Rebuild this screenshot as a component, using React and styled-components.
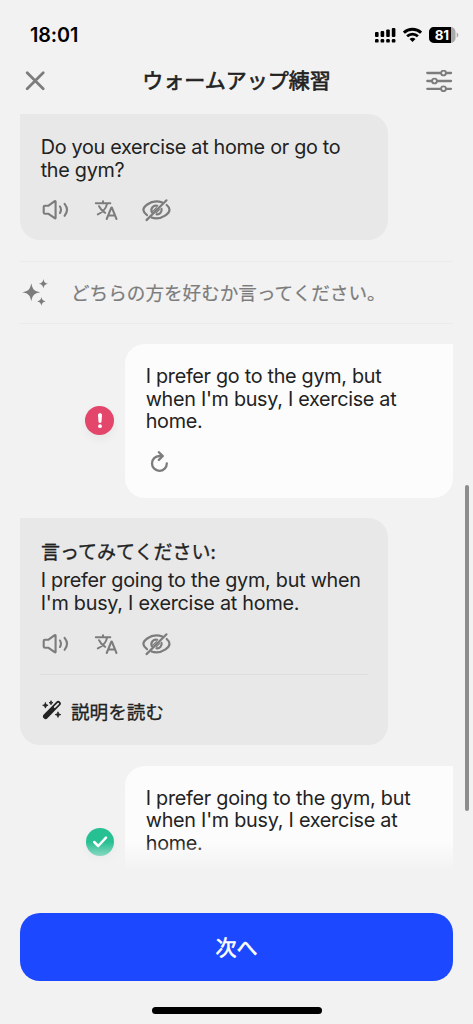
import React from 'react'
import styled, { createGlobalStyle, ThemeProvider } from 'styled-components'

const theme = {
  color: {
    background: '#f2f2f2',
    grey: '#e8e8e8',
    white: '#fcfcfc',
    line: '#ebebeb',
    lineDark: '#dedede',
    text: '#222222',
    icon: '#7c7c7c',
    blue: '#1c48ff',
    red: '#e3456b',
    green: '#27c093',
  },
  font: {
    body: '"Inter", "Noto Sans CJK JP", sans-serif',
    japanese: '"Noto Sans CJK JP", "Inter", sans-serif',
  },
}

const GlobalStyle = createGlobalStyle`
  * {
    box-sizing: border-box;
  }
  body {
    margin: 0;
    background: ${theme.color.background};
    font-family: ${theme.font.body};
    color: ${theme.color.text};
  }
  h1, p {
    margin: 0;
  }
  button {
    border: 0;
    padding: 0;
    background: none;
    cursor: pointer;
    color: inherit;
  }
  svg {
    display: block;
    flex: none;
  }
`

const Screen = styled.div`
  position: relative;
  width: 473px;
  height: 1024px;
  display: flex;
  flex-direction: column;
  overflow: hidden;
`
const StatusBar = styled.div`
  height: 58px;
  flex: none;
  padding: 11px 14px 0 30px;
  display: flex;
  align-items: center;
  justify-content: space-between;
`
const Time = styled.span`
  font-size: 19.8px;
  font-weight: 600;
  letter-spacing: -0.1px;
  color: #000;
`
const StatusIcons = styled.div`
  display: flex;
  align-items: center;
  gap: 7px;
`
const Header = styled.header`
  height: 46px;
  flex: none;
  padding: 0 20px 0 25px;
  display: flex;
  align-items: center;
  justify-content: space-between;
`
const Title = styled.h1`
  font-family: ${({ theme }) => theme.font.japanese};
  font-size: 21px;
  line-height: 30px;
  font-weight: 400;
  -webkit-text-stroke: 0.65px currentColor;
  padding: 0 0 4px 2px;
`
const IconButton = styled.button`
  color: ${({ theme }) => theme.color.icon};
`

// CONVERSATION STYLING

const Conversation = styled.main`
  position: relative;
  height: 767px;
  flex: none;
  padding: 10px 20px 0;
  overflow: hidden;

  &::after {
    content: '';
    position: absolute;
    left: 0;
    right: 0;
    bottom: 0;
    height: 29px;
    background: linear-gradient(#f2f2f200, #f2f2f2);
  }
`
const TutorBubble = styled.section`
  width: 368px;
  height: ${({ $height }) => $height}px;
  padding: ${({ $top }) => $top}px 20px 0;
  background: ${({ theme }) => theme.color.grey};
  border-radius: 0 20px 20px 20px;
`
const UserRow = styled.section`
  display: flex;
  justify-content: flex-end;
  align-items: center;
  gap: 11px;
  margin: 20.5px 0;
`
const UserBubble = styled.div`
  width: 328px;
  height: 153.5px;
  padding: 21px 20px 0;
  background: ${({ theme }) => theme.color.white};
  border-radius: 20px 0 20px 20px;
`
const Message = styled.p`
  padding-left: 0.7px;
  font-size: 19.8px;
  line-height: 22.7px;
  letter-spacing: ${({ $spacing }) => $spacing || -0.29}px;
  white-space: nowrap;
`
const Label = styled.p`
  font-family: ${({ theme }) => theme.font.japanese};
  font-size: 19px;
  line-height: 28px;
  -webkit-text-stroke: 0.35px currentColor;
  padding-left: 1px;
  margin-bottom: 4.5px;
  white-space: nowrap;
`
const Actions = styled.div`
  display: flex;
  align-items: center;
  gap: 24px;
  height: 24px;
  margin-top: ${({ $top }) => $top || 17}px;
  padding-left: ${({ $left }) => $left || 2}px;
  color: ${({ theme }) => theme.color.icon};
`
const Explain = styled.button`
  width: 328px;
  height: 71px;
  margin-top: 18px;
  padding-left: 2px;
  border-top: 1px solid ${({ theme }) => theme.color.lineDark};
  display: flex;
  align-items: center;
  gap: 9px;
  font-family: ${({ theme }) => theme.font.japanese};
  font-size: 18.6px;
  -webkit-text-stroke: 0.3px currentColor;
`
const Prompt = styled.section`
  height: 63px;
  margin: 20.5px 0;
  padding-bottom: 1px;
  border-top: 1px solid ${({ theme }) => theme.color.line};
  border-bottom: 1px solid ${({ theme }) => theme.color.line};
  display: flex;
  align-items: center;
  gap: 23px;
  color: ${({ theme }) => theme.color.icon};
`
const PromptText = styled.p`
  font-family: ${({ theme }) => theme.font.japanese};
  font-size: 18.6px;
  -webkit-text-stroke: 0.2px currentColor;
  white-space: nowrap;
`
const Badge = styled.span`
  width: ${({ $size }) => $size}px;
  height: ${({ $size }) => $size}px;
  border-radius: 50%;
  background: ${({ theme, $color }) => theme.color[$color]};
  box-shadow: 0 4px 10px #0000000d;
  display: flex;
  align-items: center;
  justify-content: center;
`
const Scrollbar = styled.div`
  position: absolute;
  top: 485px;
  right: 4px;
  width: 4px;
  height: 326px;
  border-radius: 2px;
  background: #8d8d8d;
`

// FOOTER STYLING

const Footer = styled.footer`
  flex: 1;
  padding: 42px 20px 10px;
  display: flex;
  flex-direction: column;
  align-items: center;
  justify-content: space-between;
`
const NextButton = styled.button`
  width: 433px;
  height: 68px;
  padding-bottom: 2px;
  border-radius: 20px;
  background: ${({ theme }) => theme.color.blue};
  color: #fff;
  font-family: ${({ theme }) => theme.font.japanese};
  font-size: 21px;
  -webkit-text-stroke: 0.6px currentColor;
`
const HomeIndicator = styled.div`
  width: 170px;
  height: 7px;
  border-radius: 4px;
  background: #000;
`
const BatteryText = styled.text`
  font: 700 13.5px 'Inter', sans-serif;
  letter-spacing: -0.3px;
  fill: #fff;
`

// ICONS

const SignalIcon = () => (
  <svg width="21" height="16" viewBox="0 0 21 16" fill="#000">
    <rect x="0" y="5" width="3.6" height="5" rx="1" />
    <rect x="5.6" y="4" width="3.6" height="6" rx="1" />
    <rect x="11.2" y="2.5" width="3.6" height="7.5" rx="1" />
    <rect x="16.8" y="1" width="3.6" height="9" rx="1" />
    <rect x="0" y="12" width="3.6" height="3.6" rx="1.2" />
    <rect x="5.6" y="12" width="3.6" height="3.6" rx="1.2" />
    <rect x="11.2" y="12" width="3.6" height="3.6" rx="1.2" />
    <rect x="16.8" y="12" width="3.6" height="3.6" rx="1.2" />
  </svg>
)

const WifiIcon = () => (
  <svg width="19" height="16" viewBox="0 0 19 16" fill="none" stroke="#000">
    <path d="M.9 5.7a12.5 12.5 0 0 1 17.2 0" strokeWidth="2.8" />
    <path d="M4.1 9.3a7.9 7.9 0 0 1 10.8 0" strokeWidth="2.8" />
    <path
      d="M9.5 15 6.5 12.1a4.4 4.4 0 0 1 6 0Z"
      fill="#000"
      stroke="none"
    />
  </svg>
)

const BatteryIcon = () => (
  <svg width="30" height="16" viewBox="0 0 30 16">
    <rect width="26.5" height="16" rx="4.8" fill="#aaa" />
    <path d="M22 0H4.8A4.8 4.8 0 0 0 0 4.8v6.4A4.8 4.8 0 0 0 4.8 16H22Z" />
    <path d="M27.7 5.5c2.2.8 2.2 4.2 0 5Z" fill="#aaa" />
    <BatteryText x="5.7" y="12.9">
      81
    </BatteryText>
  </svg>
)

const CloseIcon = () => (
  <svg
    width="20"
    height="20"
    viewBox="0 0 20 20"
    stroke="currentColor"
    strokeWidth="2.7"
    strokeLinecap="round"
  >
    <path d="m2.2 1.8 16 16M18.2 1.8l-16 16" />
  </svg>
)

const SettingsIcon = () => (
  <svg
    width="27"
    height="22"
    viewBox="0 0 27 22"
    fill="none"
    stroke="currentColor"
    strokeWidth="2.3"
    strokeLinecap="round"
  >
    <path d="M1.3 3h13.5M20.2 3H25M1.3 11h4.500M11.200 11H25M1.300 18.800h13.500M20.200 18.800H25" />
    <circle cx="17.5" cy="3" r="2.4" strokeWidth="1.9" />
    <circle cx="8.5" cy="11" r="2.4" strokeWidth="1.9" />
    <circle cx="17.5" cy="18.8" r="2.4" strokeWidth="1.9" />
  </svg>
)

const SpeakerIcon = () => (
  <svg
    width="28"
    height="24"
    viewBox="0 0 28 24"
    fill="none"
    stroke="currentColor"
    strokeWidth="2.1"
    strokeLinecap="round"
    strokeLinejoin="round"
  >
    <path d="M2.8 7.7h3.7L12.7 3.2c.5-.3.9-.1.9.5v16c0 .6-.4.8-.9.5L6.500 15.800H3.100c-.9 0-1.400-.5-1.400-1.400V9c0-.8.4-1.300 1.100-1.300Z" />
    <path d="M18 8.500c1.200 2 1.200 4.500 0 6.500M22.600 5.800c3 3.700 3 8.300 0 12" />
  </svg>
)

const TranslateIcon = () => (
  <svg
    width="24"
    height="24"
    viewBox="0 0 24 24"
    fill="none"
    stroke="currentColor"
    strokeWidth="2"
    strokeLinecap="round"
    strokeLinejoin="round"
  >
    <path d="M1.8 5.3h14.5M9 3.200v2M13.100 5.600C12.200 10 8.600 14.200 3.800 16.400M5 8.200c1.300 3 3.500 5.100 6.200 6.600" />
    <path d="m12.700 21 4.700-11.500h.4L22.500 21M14.300 17.500h6.600" />
  </svg>
)

const HideIcon = () => (
  <svg
    width="30"
    height="24"
    viewBox="0 0 30 24"
    fill="none"
    stroke="currentColor"
    strokeWidth="2.2"
    strokeLinecap="round"
  >
    <path d="M5 17.1C2.8 15.5 1.5 13.5 1.4 12.2 1.1 8.7 7.6 3.4 14.3 3.4c2.2 0 4.2.4 6 1.1" />
    <path d="M24.7 7c1.8 1.500 2.800 3.100 2.800 4.700 0 3.700-6.300 8.600-13.200 8.600-1.700 0-3.300-.3-4.800-.8" />
    <path d="M9.900 14.200c-1.800-3.600 1.500-7.500 5.300-6.400M19.500 10.900c.8 3.100-2.100 5.900-5 5.400" />
    <path d="m4.500 22.100 20-19.800" />
    <path d="m10.700 13.400 3.700-3.700M14.200 14.900l3.300-3.300" strokeWidth="1.3" />
  </svg>
)

const SparklesIcon = () => (
  <svg width="28" height="28" viewBox="0 0 28 28" fill="currentColor">
    <path d="M11.3 5.3c1.200 6.200 2.800 7.800 9 9-6.200 1.200-7.800 2.800-9 9-1.200-6.200-2.800-7.800-9-9 6.200-1.200 7.800-2.800 9-9Z" />
    <path d="M23.4 1c.6 3.100 1.600 4.100 4.600 4.700-3 .6-4 1.600-4.600 4.700-.6-3.100-1.600-4.100-4.600-4.700 3-.6 4-1.600 4.600-4.700Z" />
    <path d="M21.4 19c.6 2.800 1.500 3.800 4.200 4.400-2.700.6-3.600 1.500-4.200 4.400-.6-2.900-1.500-3.800-4.200-4.400 2.700-.6 3.600-1.600 4.200-4.400Z" />
  </svg>
)

const RetryIcon = () => (
  <svg
    width="20"
    height="22"
    viewBox="0 0 20 22"
    fill="none"
    stroke="currentColor"
    strokeWidth="2.3"
    strokeLinecap="round"
    strokeLinejoin="round"
  >
    <path d="M16.800 12.300a7.400 7.400 0 1 1-7.400-7.300h3.100M8.900 1.200l3.900 3.800-3.900 3.900" />
  </svg>
)

const WandIcon = () => (
  <svg width="20" height="20" viewBox="0 0 20 20" fill="none">
    <path
      d="M3.6 16.4 16.2 3.5"
      stroke="#222"
      strokeWidth="5.2"
      strokeLinecap="round"
    />
    <path
      d="m12.7 7.2 3.5-3.6"
      stroke="#e8e8e8"
      strokeWidth="1.7"
      strokeLinecap="round"
    />
    <path
      d="M3.400 2.500c.4 1.800 1 2.400 2.700 2.800-1.700.4-2.300 1-2.700 2.800C3 6.300 2.400 5.700.7 5.300 2.400 4.900 3 4.300 3.400 2.500ZM9 .7c.3 1.300.7 1.700 2 2-1.300.3-1.700.7-2 2-.3-1.300-.7-1.700-2-2 1.300-.3 1.700-.7 2-2ZM16 11.800c.4 1.800 1 2.400 2.800 2.800-1.800.4-2.400 1-2.800 2.800-.4-1.800-1-2.400-2.800-2.800 1.800-.4 2.400-1 2.800-2.800Z"
      fill="#222"
      stroke="#222"
      strokeWidth=".9"
      strokeLinejoin="round"
    />
  </svg>
)

const AlertIcon = () => (
  <svg width="6" height="16" viewBox="0 0 6 16" fill="#fff">
    <path d="M1 2c0-2.200 4-2.200 4 0l-.5 6.700c-.2 1.600-2.800 1.600-3 0Z" />
    <circle cx="3" cy="13.2" r="1.9" />
  </svg>
)

const CheckIcon = () => (
  <svg
    width="16"
    height="14"
    viewBox="0 0 16 14"
    fill="none"
    stroke="#fff"
    strokeWidth="2.5"
    strokeLinecap="round"
    strokeLinejoin="round"
  >
    <path d="m2.2 7 4 4L14 2.700" />
  </svg>
)

const TutorActions = ({ top }) => (
  <Actions $top={top}>
    <SpeakerIcon />
    <TranslateIcon />
    <HideIcon />
  </Actions>
)

const App = () => {
  return (
    <ThemeProvider theme={theme}>
      <GlobalStyle />
      <Screen>
        <StatusBar>
          <Time>18:01</Time>
          <StatusIcons>
            <SignalIcon />
            <WifiIcon />
            <BatteryIcon />
          </StatusIcons>
        </StatusBar>
        <Header>
          <IconButton aria-label="close">
            <CloseIcon />
          </IconButton>
          <Title>ウォームアップ練習</Title>
          <IconButton aria-label="settings">
            <SettingsIcon />
          </IconButton>
        </Header>
        <Conversation>
          <TutorBubble $height={126} $top={22}>
            <Message>
              Do you exercise at home or go to
              <br />
              the gym?
            </Message>
            <TutorActions />
          </TutorBubble>
          <Prompt>
            <SparklesIcon />
            <PromptText>どちらの方を好むか言ってください。</PromptText>
          </Prompt>
          <UserRow>
            <Badge $size={29} $color="red">
              <AlertIcon />
            </Badge>
            <UserBubble>
              <Message>
                I prefer go to the gym, but
                <br />
                when I'm busy, I exercise at
                <br />
                home.
              </Message>
              <Actions $left={4.5}>
                <RetryIcon />
              </Actions>
            </UserBubble>
          </UserRow>
          <TutorBubble $height={227} $top={18.5}>
            <Label>言ってみてください:</Label>
            <Message $spacing={-0.25}>
              I prefer going to the gym, but when
              <br />
              I'm busy, I exercise at home.
            </Message>
            <TutorActions top={18} />
            <Explain>
              <WandIcon />
              説明を読む
            </Explain>
          </TutorBubble>
          <UserRow>
            <Badge $size={28} $color="green">
              <CheckIcon />
            </Badge>
            <UserBubble>
              <Message $spacing={-0.25}>
                I prefer going to the gym, but
                <br />
                when I'm busy, I exercise at
                <br />
                home.
              </Message>
            </UserBubble>
          </UserRow>
        </Conversation>
        <Scrollbar />
        <Footer>
          <NextButton>次へ</NextButton>
          <HomeIndicator />
        </Footer>
      </Screen>
    </ThemeProvider>
  )
}

export default App
